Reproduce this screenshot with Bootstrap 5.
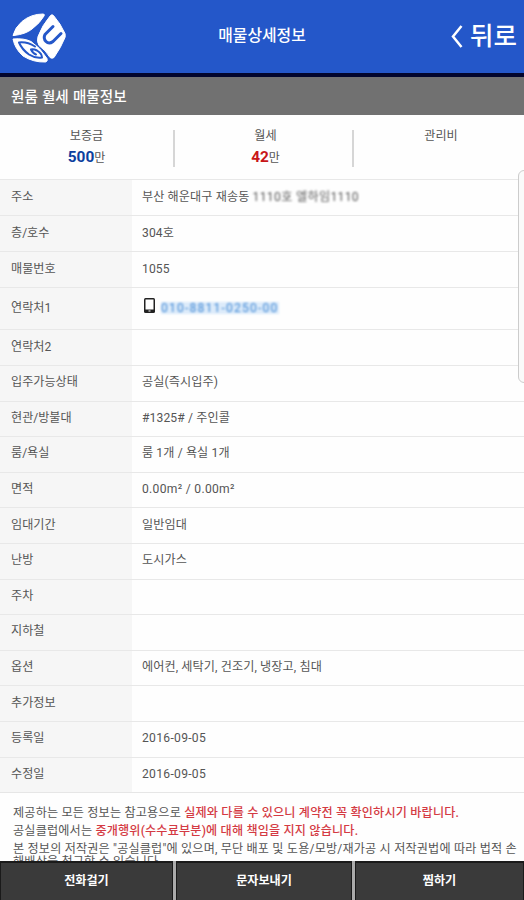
<!DOCTYPE html>
<html lang="ko">
<head>
<meta charset="utf-8">
<meta name="viewport" content="width=device-width, initial-scale=1">
<title>매물상세정보</title>
<link href="https://cdn.jsdelivr.net/npm/bootstrap@5.3.0/dist/css/bootstrap.min.css" rel="stylesheet">
<style>
body{font-family:Roboto,"Noto Sans CJK KR",sans-serif;font-size:12.1px;line-height:18px;color:#555;background:#fefefe;height:900px}
.topbar{height:77px;background:#2457c9;border-bottom:4px solid #02052c;grid-template-columns:1fr auto 1fr}
.topbar h1{font-size:15.9px;line-height:20px;font-weight:500;padding-bottom:2px}
.topbar .logo{width:56px;height:52px;margin-left:11px}
.back{font-size:25.5px;line-height:30px;font-weight:500;margin-right:7px;gap:7px}
.back span{margin-top:-2px}
.section-title{height:38px;background:#717171;color:#fff;font-family:"Noto Sans CJK KR",sans-serif;font-size:14.6px;font-weight:500;padding:0 11px 1px}
.prices{height:64px;grid-template-columns:173px 179px 1fr}
.prices>div{padding-top:12px}
.prices>div+div{padding-left:6px}
.prices>div+div::before{content:"";position:absolute;left:0;top:15px;height:37px;border-left:2px solid #d6d6d6}
.amount{font-size:15.4px;line-height:18px;margin-top:3px}
.amount span{font-size:12px}
.blue{color:#0c3f9e}.red{color:#c81618}
.info{display:grid;grid-template-rows:36px 36px 36px 42.4px repeat(13,35.6px);border-bottom:1px solid #e6e6e6}
.info-row{border-top:1px solid #e8e8e8;min-height:0}
.info-row dt{width:132px;background:#f6f6f6;padding:0 0 2px 11px;font-weight:400}
.info-row dd{padding:0 0 2px 10px;letter-spacing:.12px}
.info-row .dates{letter-spacing:.3px}
.masked{filter:blur(1px)}
.addr{letter-spacing:.35px}
.phone-icon{margin:0 6px 4px 2px}
.phone{color:#3d86d4;background:#dcebfa;line-height:12px;letter-spacing:1.2px}
.notice{padding:11px 0 0 13px;overflow:hidden;white-space:nowrap}
.notice p{margin:0;letter-spacing:.19px}
.notice p:last-child{margin-top:-5px}
.notice em{font-style:normal;font-weight:500;color:#d43a43}
.actions{height:39px;background:#aaa;font-family:"Noto Sans CJK KR",sans-serif;font-weight:700;display:grid;grid-template-columns:173px 176px 1fr;gap:3px}
.actions a{color:#fff;background:#3a3a3a;border:solid #1a1a1a;border-width:2px 1px 0;padding-bottom:3px}
.side-tab{right:-8px;top:170px;width:14px;height:213px;border:1px solid #ccc;border-radius:6px;background:#fafafa}
</style>
<script src="https://cdn.jsdelivr.net/npm/bootstrap@5.3.0/dist/js/bootstrap.bundle.min.js"></script>
</head>
<body class="d-flex flex-column overflow-hidden position-relative">
<header class="topbar d-grid align-items-center text-white flex-shrink-0">
  <svg class="logo" viewBox="11 10.500 56 52"><g fill="#fff" stroke="#fff" stroke-width="1" stroke-linejoin="round"><path d="M13 35Q15 27 22 21 31 13.500 43 13.500q2 0 1 2-4 7-12 13-6 5-18 6.500z"/><path d="M50.500 15q1.500-1.500 3 0 7 8 11.500 18 .5 2 0 4-4 10-11 20-2 1.500-4 0-4-7-11-12-2.500-4-1-9 4-11 12.500-21z"/><path d="M13 38.500q11-1 18 2.500 9 6 16 17 1 3-1.500 3.500-12 .5-22.500-6-8-7-10-17z"/></g><g fill="none" stroke="#2457c9" stroke-linecap="round" stroke-linejoin="round"><path stroke-width="3" d="M53 26L45 34q-2 4 1 7 3 3 7 0l8-8"/><path stroke-width="2" d="M35 46q-8-5-16-4 3 7 10 12 6 4 13 3 0-4-5-7-4-2-6-1 2 4 5 5"/></g></svg>
  <h1 class="m-0">매물상세정보</h1>
  <a class="back d-flex align-items-center justify-content-end text-white text-decoration-none"><svg width="12" height="23" viewBox="0 0 12 23" fill="none" stroke="#fff" stroke-width="2.5"><path d="M10.500 1L2 11.500 10.500 22"/></svg><span>뒤로</span></a>
</header>
<div class="section-title d-flex align-items-center flex-shrink-0">원룸 월세 매물정보</div>
<section class="prices d-grid text-center flex-shrink-0">
  <div>보증금<div class="amount"><b class="blue">500</b><span>만</span></div></div>
  <div class="position-relative">월세<div class="amount"><b class="red">42</b><span>만</span></div></div>
  <div class="position-relative">관리비</div>
</section>
<dl class="info m-0 flex-shrink-0">
  <div class="info-row d-flex"><dt class="d-flex align-items-center">주소</dt><dd class="d-flex align-items-center m-0">부산 해운대구 재송동&nbsp;<span class="masked addr">1110호 엘하임1110</span></dd></div>
  <div class="info-row d-flex"><dt class="d-flex align-items-center">층/호수</dt><dd class="d-flex align-items-center m-0">304호</dd></div>
  <div class="info-row d-flex"><dt class="d-flex align-items-center">매물번호</dt><dd class="d-flex align-items-center m-0">1055</dd></div>
  <div class="info-row d-flex"><dt class="d-flex align-items-center">연락처1</dt><dd class="d-flex align-items-center m-0"><svg class="phone-icon" width="11" height="15" viewBox="0 0 11 15"><rect width="11" height="15" rx="1.500" fill="#222"/><path fill="#fff" d="M1.500 1.500h8v10h-8zM4.500 12.500h2v1h-2z"/></svg><span class="masked phone">010-8811-0250-00</span></dd></div>
  <div class="info-row d-flex"><dt class="d-flex align-items-center">연락처2</dt><dd class="m-0"></dd></div>
  <div class="info-row d-flex"><dt class="d-flex align-items-center">입주가능상태</dt><dd class="d-flex align-items-center m-0">공실(즉시입주)</dd></div>
  <div class="info-row d-flex"><dt class="d-flex align-items-center">현관/방불대</dt><dd class="d-flex align-items-center m-0">#1325# / 주인콜</dd></div>
  <div class="info-row d-flex"><dt class="d-flex align-items-center">룸/욕실</dt><dd class="d-flex align-items-center m-0">룸 1개 / 욕실 1개</dd></div>
  <div class="info-row d-flex"><dt class="d-flex align-items-center">면적</dt><dd class="d-flex align-items-center m-0 dates">0.00m² / 0.00m²</dd></div>
  <div class="info-row d-flex"><dt class="d-flex align-items-center">임대기간</dt><dd class="d-flex align-items-center m-0">일반임대</dd></div>
  <div class="info-row d-flex"><dt class="d-flex align-items-center">난방</dt><dd class="d-flex align-items-center m-0">도시가스</dd></div>
  <div class="info-row d-flex"><dt class="d-flex align-items-center">주차</dt><dd class="m-0"></dd></div>
  <div class="info-row d-flex"><dt class="d-flex align-items-center">지하철</dt><dd class="m-0"></dd></div>
  <div class="info-row d-flex"><dt class="d-flex align-items-center">옵션</dt><dd class="d-flex align-items-center m-0">에어컨, 세탁기, 건조기, 냉장고, 침대</dd></div>
  <div class="info-row d-flex"><dt class="d-flex align-items-center">추가정보</dt><dd class="m-0"></dd></div>
  <div class="info-row d-flex"><dt class="d-flex align-items-center">등록일</dt><dd class="d-flex align-items-center m-0 dates">2016-09-05</dd></div>
  <div class="info-row d-flex"><dt class="d-flex align-items-center">수정일</dt><dd class="d-flex align-items-center m-0 dates">2016-09-05</dd></div>
</dl>
<div class="notice flex-grow-1"><p>제공하는 모든 정보는 참고용으로 <em>실제와 다를 수 있으니 계약전 꼭 확인하시기 바랍니다.</em></p><p>공실클럽에서는 <em>중개행위(수수료부분)에 대해 책임을 지지 않습니다.</em></p><p>본 정보의 저작권은 "공실클럽"에 있으며, 무단 배포 및 도용/모방/재가공 시 저작권법에 따라 법적 손</p><p>해배상을 청구할 수 있습니다.</p></div>
<nav class="actions flex-shrink-0 text-center">
  <a class="d-flex align-items-center justify-content-center text-decoration-none">전화걸기</a>
  <a class="d-flex align-items-center justify-content-center text-decoration-none">문자보내기</a>
  <a class="d-flex align-items-center justify-content-center text-decoration-none">찜하기</a>
</nav>
<div class="side-tab position-absolute"></div>
</body>
</html>
